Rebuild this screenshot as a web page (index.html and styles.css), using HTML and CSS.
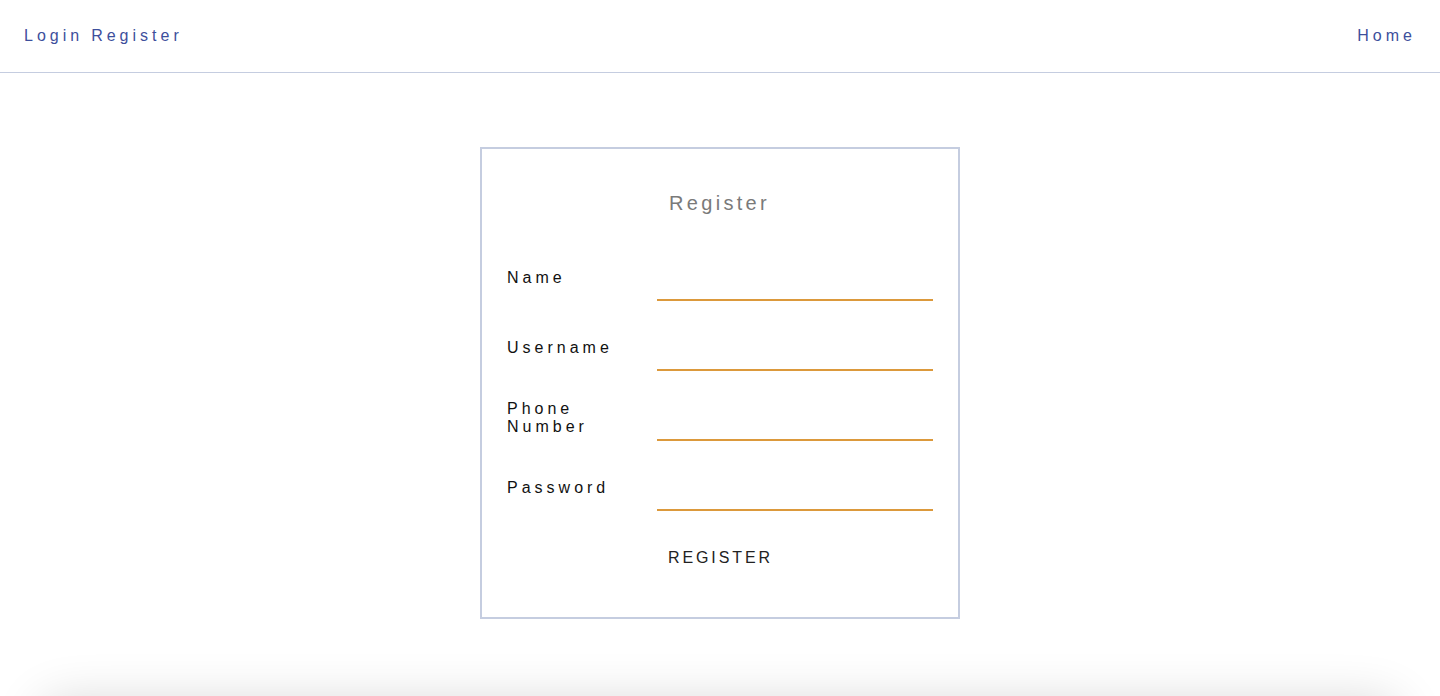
FILE: index.html
```html
<!DOCTYPE html>
<html lang="en">
<head>
<meta charset="utf-8">
<title>Register</title>
<link rel="stylesheet" href="styles.css">
</head>
<body>
<header class="topbar">
  <nav class="nav-left"><a class="nav-link" href="#">Login</a><a class="nav-link nav-gap" href="#">Register</a></nav>
  <nav class="nav-right"><a class="nav-link" href="#">Home</a></nav>
</header>
<main class="main">
  <form class="card">
    <h2 class="card-title">Register</h2>
    <div class="rows">
      <div class="row"><label class="label">Name</label><input class="field" type="text"></div>
      <div class="row"><label class="label">Username</label><input class="field" type="text"></div>
      <div class="row"><label class="label">Phone<br>Number</label><input class="field" type="text"></div>
      <div class="row"><label class="label">Password</label><input class="field" type="password"></div>
    </div>
    <button class="submit" type="button">REGISTER</button>
  </form>
</main>
<footer class="footer"></footer>
</body>
</html>
```

FILE: styles.css
```css
html, body {
  margin: 0;
  padding: 0;
  height: 696px;
  overflow: hidden;
  background: #ffffff;
}
body {
  font-family: "Liberation Sans", Arial, Helvetica, sans-serif;
  font-size: 16px;
  color: #111;
}
.topbar {
  height: 72px;
  border-bottom: 1px solid #c5cde0;
  display: flex;
  align-items: center;
  justify-content: space-between;
  padding: 0 24px 0 24px;
}
.nav-link {
  color: #3d4f9c;
  text-decoration: none;
  letter-spacing: 4px;
  font-size: 16px;
}
.nav-gap { margin-left: 8px; }
.main {
  display: flex;
  justify-content: center;
  padding: 74px 0 82px;
}
.card {
  width: 426px;
  border: 2px solid #c5cde0;
  padding: 25px 25px 39px;
  display: flex;
  flex-direction: column;
  align-items: stretch;
}
.card-title {
  margin: 18px 0 0;
  font-size: 20px;
  font-weight: normal;
  line-height: 23px;
  color: #7a7a7a;
  letter-spacing: 3.3px;
  text-align: center;
  padding-right: 1px;
}
.rows {
  margin-top: 38px;
  display: flex;
  flex-direction: column;
  gap: 22px;
}
.row {
  display: flex;
  align-items: center;
}
.label {
  width: 150px;
  flex: none;
  letter-spacing: 4px;
  line-height: 18px;
  padding-top: 2px;
  color: #111;
}
.field {
  width: 276px;
  height: 48px;
  box-sizing: border-box;
  border: none;
  border-bottom: 2px solid #dc993b;
  outline: none;
  background: transparent;
  font: inherit;
  padding: 0;
}
.submit {
  align-self: center;
  margin-top: 26px;
  padding: 12px 0 11px 1px;
  border: none;
  background: transparent;
  font-family: "Liberation Sans", Arial, Helvetica, sans-serif;
  font-size: 16px;
  line-height: 18px;
  letter-spacing: 2.9px;
  color: #222;
  cursor: pointer;
}
.footer {
  height: 60px;
  margin: 0 40px;
  border-radius: 24px;
  background: #ececec;
  box-shadow: 0 0 50px rgba(0, 0, 0, 0.16);
}
```
